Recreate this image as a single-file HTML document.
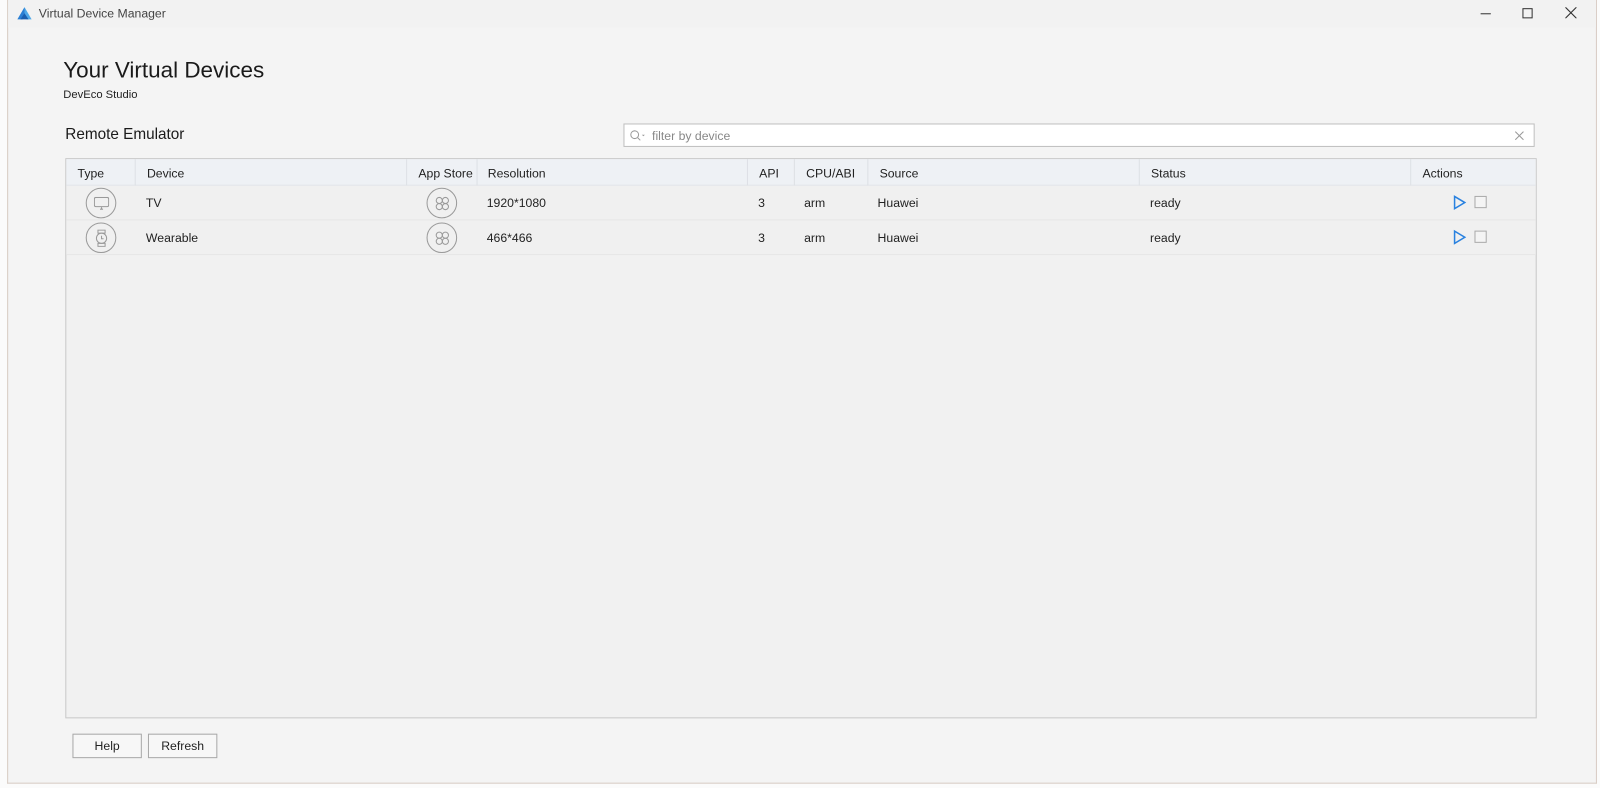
<!DOCTYPE html>
<html><head><meta charset="utf-8"><style>
*{margin:0;padding:0;box-sizing:border-box}
body{width:1600px;height:788px;background:#fbfbfb;font-family:"Liberation Sans",sans-serif;color:#222;position:relative;overflow:hidden}
.wrap{position:absolute;left:0;top:0;width:1568px;height:772px;transform:scale(1.0204);transform-origin:0 0}
.win{position:absolute;left:7px;top:0;width:1558px;height:768px;background:#f4f4f4;border:1px solid #d8ccc4;border-top:none}
.tb{position:absolute;left:0;top:0;width:100%;height:27px;background:#f2f2f2}
.abs{position:absolute;white-space:nowrap}
.tbl{position:absolute;left:56px;top:155px;width:1442px;height:549px;border:1px solid #c8c8c8;background:#f1f1f1}
.hdr{position:absolute;left:0;top:0;width:100%;height:26px;background:#eef1f5;border-bottom:1px solid #e0e3e8}
.row{position:absolute;left:0;width:100%;height:34px;background:#f0f0f0;border-bottom:1px solid #e6e6e6}
.sep{position:absolute;top:0;width:1px;height:26px;background:#dde0e5}
.t{font-size:12px;position:absolute;white-space:nowrap}
.btn{position:absolute;top:719px;height:24px;border:1px solid #a8a8a8;background:#f7f7f7;font-size:12px;text-align:center;line-height:22px}
.circ{position:absolute;width:30px;height:30px;border:1px solid #9a9a9a;border-radius:50%}
</style></head><body>
<div class="wrap">
<div class="win">
 <div class="tb">
  <svg class="abs" style="left:9px;top:7px" width="14" height="13" viewBox="0 0 14 13"><path d="M7 0L0 12h5l2-4z" fill="#2a7fd4"/><path d="M7 0l7 12H9L7 8z" fill="#4fa8e8"/><path d="M3 12h8L7 6z" fill="#1a5fb0"/></svg>
  <div class="abs" style="left:30px;top:6px;font-size:12px;color:#444">Virtual Device Manager</div>
  <div class="abs" style="left:1443px;top:13px;width:10px;height:1px;background:#333"></div>
  <div class="abs" style="left:1484px;top:8px;width:10px;height:10px;border:1px solid #333"></div>
  <svg class="abs" style="left:1526px;top:7px" width="11" height="11"><path d="M0 0L11 11M11 0L0 11" stroke="#333" stroke-width="1.1"/></svg>
 </div>
 <div class="abs" style="left:54px;top:56px;font-size:22px;color:#1a1a1a">Your Virtual Devices</div>
 <div class="abs" style="left:54px;top:87px;font-size:11px;color:#222">DevEco Studio</div>
 <div class="abs" style="left:56px;top:123px;font-size:15px;color:#1a1a1a">Remote Emulator</div>
 <div class="abs" style="left:603px;top:121px;width:893px;height:23px;background:#fff;border:1px solid #bfbfbf">
  <svg class="abs" style="left:5px;top:5px" width="16" height="12"><circle cx="5" cy="5" r="3.8" fill="none" stroke="#999" stroke-width="1"/><path d="M8 8l2.5 2.5" stroke="#999"/><path d="M12 5h3l-1.5 1.5z" fill="#999"/></svg>
  <div class="abs" style="left:27px;top:4px;font-size:12px;color:#888">filter by device</div>
  <svg class="abs" style="left:872px;top:6px" width="10" height="10"><path d="M1 1l8 8M9 1l-8 8" stroke="#999"/></svg>
 </div>
 <div class="tbl">
  <div class="hdr">
   <div class="t" style="left:11px;top:7px">Type</div>
   <div class="sep" style="left:67px"></div>
   <div class="t" style="left:79px;top:7px">Device</div>
   <div class="sep" style="left:333px"></div>
   <div class="t" style="left:345px;top:7px">App Store</div>
   <div class="sep" style="left:402px"></div>
   <div class="t" style="left:413px;top:7px">Resolution</div>
   <div class="sep" style="left:667px"></div>
   <div class="t" style="left:679px;top:7px">API</div>
   <div class="sep" style="left:713px"></div>
   <div class="t" style="left:725px;top:7px">CPU/ABI</div>
   <div class="sep" style="left:785px"></div>
   <div class="t" style="left:797px;top:7px">Source</div>
   <div class="sep" style="left:1051px"></div>
   <div class="t" style="left:1063px;top:7px">Status</div>
   <div class="sep" style="left:1317px"></div>
   <div class="t" style="left:1329px;top:7px">Actions</div>
  </div>
  <div class="row" style="top:26px">
   <div class="circ" style="left:19px;top:2px"><svg style="position:absolute;left:7px;top:8px" width="15" height="13"><rect x="0.5" y="0.5" width="14" height="9" rx="1.5" fill="none" stroke="#999"/><path d="M6 12h3M7.5 10v2" stroke="#999"/></svg></div>
   <div class="t" style="left:78px;top:10px">TV</div>
   <div class="circ" style="left:353px;top:2px"><svg style="position:absolute;left:7px;top:7px" width="15" height="15"><g fill="none" stroke="#999"><circle cx="4.5" cy="4.5" r="3"/><circle cx="10.5" cy="4.5" r="3"/><circle cx="4.5" cy="10.5" r="3"/><circle cx="10.5" cy="10.5" r="3"/></g></svg></div>
   <div class="t" style="left:412px;top:10px">1920*1080</div>
   <div class="t" style="left:678px;top:10px">3</div>
   <div class="t" style="left:723px;top:10px">arm</div>
   <div class="t" style="left:795px;top:10px">Huawei</div>
   <div class="t" style="left:1062px;top:10px">ready</div>
   <svg style="position:absolute;left:1359px;top:9px" width="13" height="15"><path d="M1.5 1.5L11.5 7.5 1.5 13.5z" fill="none" stroke="#2a82e0" stroke-width="1.5"/></svg>
   <div style="position:absolute;left:1380px;top:10px;width:12px;height:12px;border:1px solid #aaa;background:#f4f4f4"></div>
  </div>
  <div class="row" style="top:60px">
   <div class="circ" style="left:19px;top:2px"><svg style="position:absolute;left:8px;top:6px" width="13" height="17"><rect x="3" y="0.5" width="7" height="3" fill="none" stroke="#999"/><rect x="3" y="13.5" width="7" height="3" fill="none" stroke="#999"/><circle cx="6.5" cy="8.5" r="5" fill="none" stroke="#999"/><path d="M6.5 6v3h2" stroke="#999" fill="none"/></svg></div>
   <div class="t" style="left:78px;top:10px">Wearable</div>
   <div class="circ" style="left:353px;top:2px"><svg style="position:absolute;left:7px;top:7px" width="15" height="15"><g fill="none" stroke="#999"><circle cx="4.5" cy="4.5" r="3"/><circle cx="10.5" cy="4.5" r="3"/><circle cx="4.5" cy="10.5" r="3"/><circle cx="10.5" cy="10.5" r="3"/></g></svg></div>
   <div class="t" style="left:412px;top:10px">466*466</div>
   <div class="t" style="left:678px;top:10px">3</div>
   <div class="t" style="left:723px;top:10px">arm</div>
   <div class="t" style="left:795px;top:10px">Huawei</div>
   <div class="t" style="left:1062px;top:10px">ready</div>
   <svg style="position:absolute;left:1359px;top:9px" width="13" height="15"><path d="M1.5 1.5L11.5 7.5 1.5 13.5z" fill="none" stroke="#2a82e0" stroke-width="1.5"/></svg>
   <div style="position:absolute;left:1380px;top:10px;width:12px;height:12px;border:1px solid #aaa;background:#f4f4f4"></div>
  </div>
 </div>
 <div class="btn" style="left:63px;width:68px">Help</div>
 <div class="btn" style="left:137px;width:68px">Refresh</div>
</div>
</div>
</body></html>
